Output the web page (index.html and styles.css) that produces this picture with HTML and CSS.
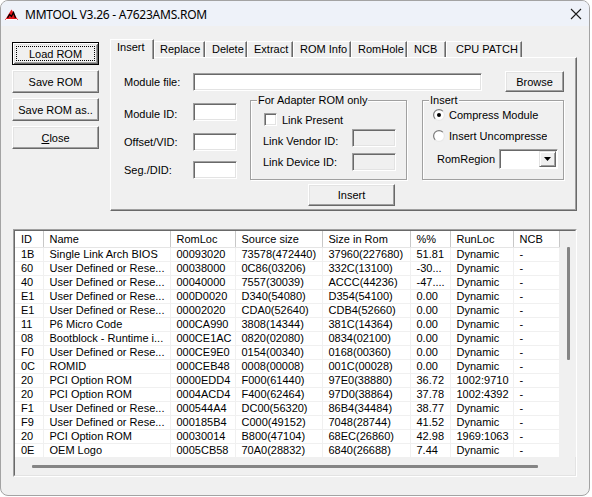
FILE: index.html
```html
<!DOCTYPE html>
<html>
<head>
<meta charset="utf-8">
<title>MMTOOL</title>
<link rel="stylesheet" href="styles.css">
</head>
<body>
<div class="window">
  <div class="titlebar">
    <svg class="app-icon" width="13" height="11" viewBox="0 0 13 11">
      <path d="M0 11 L6.5 0.5 L13 11 Z" fill="#e3141b"/>
      <path d="M2.5 9 L4.5 5.5 L6.5 7.5 L8.5 3.5 L10.5 9" stroke="#000" stroke-width="1.3" fill="none"/>
      <path d="M1 10.5 H12" stroke="#fff" stroke-width="1"/>
    </svg>
    <span class="title">MMTOOL V3.26 - A7623AMS.ROM</span>
    <svg class="close" width="12" height="12" viewBox="0 0 12 12">
      <path d="M1 1 L11 11 M11 1 L1 11" stroke="#1b1b1b" stroke-width="1.1"/>
    </svg>
  </div>
  <div class="client">
    <div class="top">
      <div class="side">
        <div class="btn side-btn default">Load ROM</div>
        <div class="btn side-btn">Save ROM</div>
        <div class="btn side-btn">Save ROM as..</div>
        <div class="btn side-btn"><span><u>C</u>lose</span></div>
      </div>
      <div class="tabctl">
        <div class="tabrow">
          <div class="tab sel t-insert">Insert</div>
          <div class="tab t-replace">Replace</div>
          <div class="tab t-delete">Delete</div>
          <div class="tab t-extract">Extract</div>
          <div class="tab t-rominfo">ROM Info</div>
          <div class="tab t-romhole">RomHole</div>
          <div class="tab t-ncb">NCB</div>
          <div class="tab t-cpu">CPU PATCH</div>
        </div>
        <div class="panel">
          <div class="row1">
            <span class="lbl lbl-w">Module file:</span>
            <div class="edit edit-wide"></div>
            <div class="btn browse">Browse</div>
          </div>
          <div class="row2">
            <div class="leftcol">
              <div class="frow fr1"><span class="lbl lbl-w">Module ID:</span><div class="edit edit-small"></div></div>
              <div class="frow fr2"><span class="lbl lbl-w">Offset/VID:</span><div class="edit edit-small"></div></div>
              <div class="frow fr3"><span class="lbl lbl-w">Seg./DID:</span><div class="edit edit-small"></div></div>
            </div>
            <fieldset class="grp grp-adapter">
              <legend>For Adapter ROM only</legend>
              <div class="chkrow"><span class="chk"></span><span class="chk-text">Link Present</span></div>
              <div class="drow dr1"><span class="lbl lbl-link">Link Vendor ID:</span><div class="edit edit-small dis"></div></div>
              <div class="drow dr2"><span class="lbl lbl-link">Link Device ID:</span><div class="edit edit-small dis"></div></div>
            </fieldset>
            <fieldset class="grp grp-insert">
              <legend>Insert</legend>
              <div class="radrow rr1">
                <svg width="12" height="12" viewBox="0 0 12 12">
                  <defs><linearGradient id="rg1" x1="0" y1="0" x2="1" y2="1"><stop offset="0.45" stop-color="#7a7a7a"/><stop offset="0.55" stop-color="#e8e8e8"/></linearGradient></defs>
                  <circle cx="6" cy="6" r="5.4" fill="#fff" stroke="url(#rg1)" stroke-width="1.2"/>
                  <circle cx="6" cy="6" r="2" fill="#000"/>
                </svg>
                <span class="rad-text">Compress Module</span>
              </div>
              <div class="radrow rr2">
                <svg width="12" height="12" viewBox="0 0 12 12">
                  <defs><linearGradient id="rg2" x1="0" y1="0" x2="1" y2="1"><stop offset="0.45" stop-color="#7a7a7a"/><stop offset="0.55" stop-color="#e8e8e8"/></linearGradient></defs>
                  <circle cx="6" cy="6" r="5.4" fill="#fff" stroke="url(#rg2)" stroke-width="1.2"/>
                </svg>
                <span class="rad-text clip">Insert Uncompressed</span>
              </div>
              <div class="comborow">
                <span class="lbl lbl-region">RomRegion</span>
                <div class="combo">
                  <div class="combo-field"></div>
                  <div class="combo-btn">
                    <svg width="7" height="4" viewBox="0 0 7 4"><path d="M0 0 H7 L3.5 4 Z" fill="#000"/></svg>
                  </div>
                </div>
              </div>
            </fieldset>
          </div>
          <div class="row3"><div class="btn insert-btn">Insert</div></div>
        </div>
      </div>
    </div>
    <div class="list">
      <div class="lv">
        <div class="lv-top">
          <table class="grid">
            <colgroup>
              <col class="c-id"><col class="c-name"><col class="c-loc"><col class="c-src"><col class="c-rom"><col class="c-pct"><col class="c-run"><col class="c-ncb">
            </colgroup>
            <thead>
              <tr><th>ID</th><th>Name</th><th>RomLoc</th><th>Source size</th><th>Size in Rom</th><th>%%</th><th>RunLoc</th><th>NCB</th></tr>
            </thead>
            <tbody>
              <tr><td>1B</td><td>Single Link Arch BIOS</td><td>00093020</td><td>73578(472440)</td><td>37960(227680)</td><td>51.81</td><td>Dynamic</td><td>-</td></tr>
              <tr><td>60</td><td>User Defined or Rese...</td><td>00038000</td><td>0C86(03206)</td><td>332C(13100)</td><td>-30...</td><td>Dynamic</td><td>-</td></tr>
              <tr><td>40</td><td>User Defined or Rese...</td><td>00040000</td><td>7557(30039)</td><td>ACCC(44236)</td><td>-47....</td><td>Dynamic</td><td>-</td></tr>
              <tr><td>E1</td><td>User Defined or Rese...</td><td>000D0020</td><td>D340(54080)</td><td>D354(54100)</td><td>0.00</td><td>Dynamic</td><td>-</td></tr>
              <tr><td>E1</td><td>User Defined or Rese...</td><td>00002020</td><td>CDA0(52640)</td><td>CDB4(52660)</td><td>0.00</td><td>Dynamic</td><td>-</td></tr>
              <tr><td>11</td><td>P6 Micro Code</td><td>000CA990</td><td>3808(14344)</td><td>381C(14364)</td><td>0.00</td><td>Dynamic</td><td>-</td></tr>
              <tr><td>08</td><td>Bootblock - Runtime i...</td><td>000CE1AC</td><td>0820(02080)</td><td>0834(02100)</td><td>0.00</td><td>Dynamic</td><td>-</td></tr>
              <tr><td>F0</td><td>User Defined or Rese...</td><td>000CE9E0</td><td>0154(00340)</td><td>0168(00360)</td><td>0.00</td><td>Dynamic</td><td>-</td></tr>
              <tr><td>0C</td><td>ROMID</td><td>000CEB48</td><td>0008(00008)</td><td>001C(00028)</td><td>0.00</td><td>Dynamic</td><td>-</td></tr>
              <tr><td>20</td><td>PCI Option ROM</td><td>0000EDD4</td><td>F000(61440)</td><td>97E0(38880)</td><td>36.72</td><td>1002:9710</td><td>-</td></tr>
              <tr><td>20</td><td>PCI Option ROM</td><td>0004ACD4</td><td>F400(62464)</td><td>97D0(38864)</td><td>37.78</td><td>1002:4392</td><td>-</td></tr>
              <tr><td>F1</td><td>User Defined or Rese...</td><td>000544A4</td><td>DC00(56320)</td><td>86B4(34484)</td><td>38.77</td><td>Dynamic</td><td>-</td></tr>
              <tr><td>F9</td><td>User Defined or Rese...</td><td>000185B4</td><td>C000(49152)</td><td>7048(28744)</td><td>41.52</td><td>Dynamic</td><td>-</td></tr>
              <tr><td>20</td><td>PCI Option ROM</td><td>00030014</td><td>B800(47104)</td><td>68EC(26860)</td><td>42.98</td><td>1969:1063</td><td>-</td></tr>
              <tr><td>0E</td><td>OEM Logo</td><td>0005CB58</td><td>70A0(28832)</td><td>6840(26688)</td><td>7.44</td><td>Dynamic</td><td>-</td></tr>
            </tbody>
          </table>
          <div class="vscroll"><div class="vthumb"></div></div>
        </div>
        <div class="hscroll"><div class="hthumb"></div></div>
      </div>
    </div>
  </div>
</div>
</body>
</html>
```
FILE: styles.css
```css
* { box-sizing: border-box; }
html, body { margin: 0; padding: 0; background: #ffffff; }
body {
  font-family: "Liberation Sans", Arial, sans-serif;
  font-size: 11px;
  color: #000;
  width: 592px;
  height: 497px;
  overflow: hidden;
}

.window {
  width: 590px;
  height: 496px;
  border: 1px solid #a3a3a3;
  border-radius: 8px;
  overflow: hidden;
  background: #f0f0f0;
  display: flex;
  flex-direction: column;
}

/* title bar */
.titlebar {
  height: 25px;
  flex: none;
  background: #eef2f9;
  display: flex;
  align-items: center;
  padding-left: 4px;
}
.app-icon { flex: none; margin-top: 1px; }
.title {
  flex: 1;
  margin-left: 7px;
  margin-top: 1px;
  font-family: "Noto Sans", "Open Sans", sans-serif;
  font-size: 12px;
  letter-spacing: -0.25px;
  color: #000;
}
.close { flex: none; margin-right: 7px; margin-top: 1px; }

/* client */
.client {
  flex: 1;
  padding: 13px 0 0 11px;
}
.top { display: flex; }

.side {
  width: 98px;
  flex: none;
  padding-top: 3px;
}

.btn {
  display: flex;
  align-items: center;
  justify-content: center;
  background: #f0f0f0;
  border: 1px solid;
  border-color: #ffffff #696969 #696969 #ffffff;
  box-shadow: inset -1px -1px 0 #a0a0a0, inset 1px 1px 0 #e3e3e3;
  white-space: nowrap;
}
.side-btn {
  width: 87px;
  height: 23px;
  margin-bottom: 5px;
}
.btn.default {
  border-color: #000;
  box-shadow: inset 1px 1px 0 #ffffff, inset -1px -1px 0 #696969, inset 2px 2px 0 #e3e3e3, inset -2px -2px 0 #a0a0a0;
  outline: 1px dotted #000;
  outline-offset: -5px;
}

/* tabs */
.tabctl { width: 467px; flex: none; }
.tabrow {
  height: 18px;
  display: flex;
  align-items: flex-end;
  position: relative;
  z-index: 2;
}
.tab {
  height: 16px;
  border: 1px solid;
  border-bottom: none;
  border-color: #ffffff #696969 transparent #ffffff;
  box-shadow: inset -1px 0 0 #a0a0a0;
  padding: 1px 0 0 6px;
  line-height: 13px;
  background: #f0f0f0;
  white-space: nowrap;
}
.tab.sel {
  height: 20px;
  margin-bottom: -2px;
  padding: 1px 0 0 6px;
}
.t-insert { width: 44px; }
.t-replace { width: 51px; padding-left: 5px; }
.t-delete { width: 42px; }
.t-extract { width: 46px; }
.t-rominfo { width: 58px; }
.t-romhole { width: 56px; }
.t-ncb { width: 39px; }
.t-cpu { width: 76px; padding-left: 9px; }

.panel {
  height: 154px;
  border: 1px solid;
  border-color: #ffffff #696969 #696969 #ffffff;
  box-shadow: inset -1px -1px 0 #a0a0a0;
  padding: 13px 0 0 13px;
  position: relative;
  z-index: 1;
}

.lbl { white-space: nowrap; flex: none; }
.lbl-w { width: 69px; }

.edit {
  flex: none;
  height: 18px;
  background: #ffffff;
  border: 1px solid;
  border-color: #a0a0a0 #ffffff #ffffff #a0a0a0;
  box-shadow: inset 1px 1px 0 #696969, inset -1px -1px 0 #e3e3e3;
}
.edit.dis { background: #f0f0f0; }
.edit-wide { width: 289px; }
.edit-small { width: 44px; }

.row1 {
  display: flex;
  align-items: center;
  height: 21px;
}
.browse {
  width: 59px;
  height: 21px;
  margin-left: 23px;
}

.row2 {
  display: flex;
  margin-top: 2px;
}
.leftcol {
  width: 113px;
  margin-right: 13px;
  flex: none;
}
.frow {
  display: flex;
  align-items: center;
  height: 18px;
}
.fr1 { margin-top: 9px; }
.fr1 .lbl { padding-top: 4px; }
.fr2 { margin-top: 12px; }
.fr3 { margin-top: 10px; }

.grp {
  margin: 0;
  padding: 0 0 0 6px;
  height: 86px;
  border: 1px solid #a0a0a0;
  box-shadow: inset 1px 1px 0 #ffffff, 1px 1px 0 #ffffff;
  min-width: 0;
  flex: none;
}
.grp legend {
  padding: 0 1px;
  font-size: 11px;
  line-height: 13px;
  background: #f0f0f0;
}
.grp-adapter { width: 157px; margin-right: 15px; }
.grp-insert { width: 142px; }

.chkrow {
  display: flex;
  align-items: center;
  height: 13px;
  margin-top: 6px;
  margin-left: 7px;
}
.chk {
  width: 13px;
  height: 13px;
  flex: none;
  background: #ffffff;
  border: 1px solid;
  border-color: #a0a0a0 #ffffff #ffffff #a0a0a0;
  box-shadow: inset 1px 1px 0 #696969, inset -1px -1px 0 #e3e3e3;
}
.chk-text { margin-left: 5px; }

.drow {
  display: flex;
  align-items: center;
  height: 18px;
  margin-left: 6px;
}
.dr1 { margin-top: 3px; }
.dr1 .lbl { padding-top: 6px; }
.dr2 { margin-top: 6px; }
.lbl-link { width: 89px; }

.radrow {
  display: flex;
  align-items: center;
  height: 13px;
  margin-left: 4px;
}
.radrow svg { flex: none; }
.rr1 { margin-top: 1px; }
.rr2 { margin-top: 8px; }
.rad-text { margin-left: 4px; white-space: nowrap; }
.rad-text.clip { width: 98px; overflow: hidden; }

.comborow {
  display: flex;
  align-items: center;
  height: 20px;
  margin-top: 7px;
  margin-left: 8px;
}
.lbl-region { width: 62px; }
.combo {
  width: 59px;
  height: 20px;
  display: flex;
  border: 1px solid;
  border-color: #a0a0a0 #ffffff #ffffff #a0a0a0;
  box-shadow: inset 1px 1px 0 #696969;
  padding: 1px;
  background: #ffffff;
}
.combo-field { flex: 1; background: #ffffff; }
.combo-btn {
  width: 17px;
  flex: none;
  display: flex;
  align-items: center;
  justify-content: center;
  background: #f0f0f0;
  border: 1px solid;
  border-color: #e3e3e3 #696969 #696969 #e3e3e3;
  box-shadow: inset 1px 1px 0 #ffffff, inset -1px -1px 0 #a0a0a0;
}

.row3 { margin-top: 4px; display: flex; }
.insert-btn {
  width: 87px;
  height: 22px;
  margin-left: 184px;
}

/* list view */
.list {
  width: 564px;
  height: 248px;
  margin-top: 18px;
  margin-left: 1px;
  border: 1px solid;
  border-color: #a0a0a0 #ffffff #ffffff #a0a0a0;
}
.lv {
  height: 100%;
  border: 1px solid;
  border-color: #696969 #e3e3e3 #e3e3e3 #696969;
  display: flex;
  flex-direction: column;
  background: #f0f0f0;
}
.lv-top {
  display: flex;
  height: 226px;
  flex: none;
}
.grid {
  width: 544px;
  table-layout: fixed;
  border-collapse: collapse;
  background: #ffffff;
  align-self: flex-start;
}
.c-id { width: 28px; }
.c-name { width: 127px; }
.c-loc { width: 65px; }
.c-src { width: 87px; }
.c-rom { width: 88px; }
.c-pct { width: 40px; }
.c-run { width: 63px; }
.c-ncb { width: 46px; }

.grid th {
  height: 16px;
  padding: 0 0 0 6px;
  font-weight: normal;
  text-align: left;
  background: #ffffff;
  border-right: 1px solid #c8c8c8;
  border-bottom: 1px solid #e5e5e5;
  line-height: 14px;
  white-space: nowrap;
  overflow: hidden;
}
.grid td {
  height: 14px;
  padding: 0 0 0 6px;
  line-height: 13px;
  border-right: 1px solid #f0f0f0;
  border-bottom: 1px solid #f0f0f0;
  white-space: nowrap;
  overflow: hidden;
  text-overflow: clip;
}

.vscroll {
  width: 16px;
  flex: none;
  background: #f0f0f0;
  padding: 16px 0 0 7px;
}
.vthumb {
  width: 3px;
  height: 113px;
  background: #858585;
  border-radius: 1px;
}
.hscroll {
  flex: 1;
  background: #f0f0f0;
  padding: 8px 0 0 17px;
}
.hthumb {
  width: 506px;
  height: 3px;
  background: #858585;
  border-radius: 1px;
}
```
